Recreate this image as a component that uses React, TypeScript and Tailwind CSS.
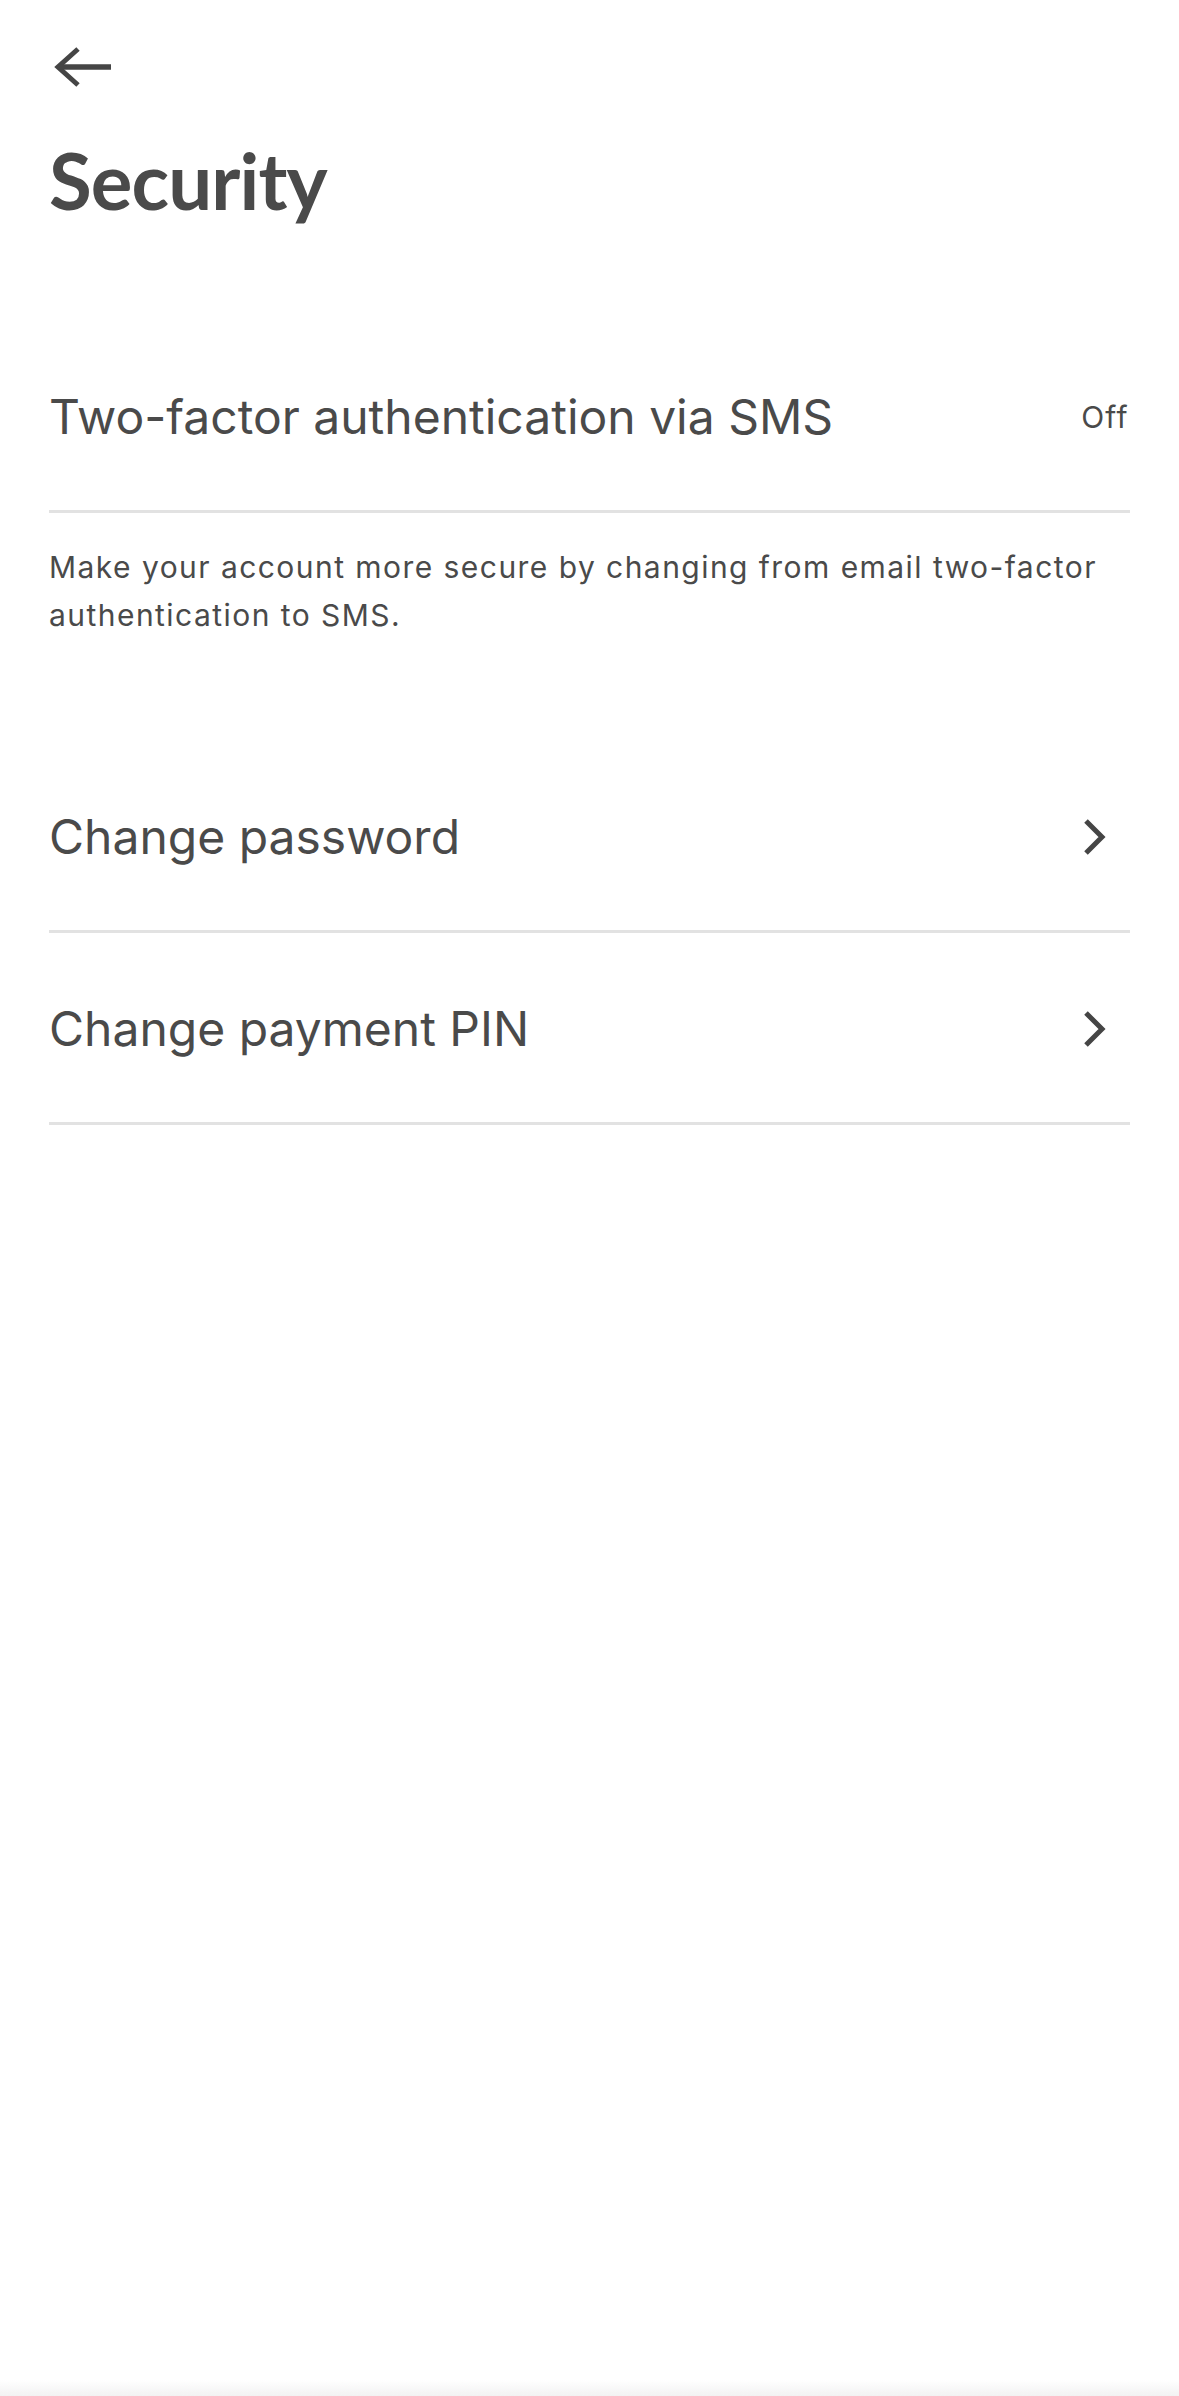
import React from "react";

const BackArrow = () => (
  <svg width="64" height="40" viewBox="0 0 64 40" fill="none">
    <path d="M29 2 L9 20 L29 38" stroke="#454545" strokeWidth="5" />
    <path d="M9 20 H62" stroke="#454545" strokeWidth="5.5" />
  </svg>
);

const Chevron = () => (
  <svg width="24" height="38" viewBox="0 0 24 38" fill="none">
    <path d="M3 3 L19 19 L3 35" stroke="#454545" strokeWidth="5" />
  </svg>
);

const Row = ({ label, right }: { label: string; right: React.ReactNode }) => (
  <div className="flex h-[192px] items-center justify-between border-b-[3px] border-[#e2e2e2] pt-[3px]">
    <span className="text-[48px] leading-none text-[#4a4a4a]">{label}</span>
    {right}
  </div>
);

export default function App() {
  return (
    <div
      className="flex h-[2396px] flex-col bg-white"
      style={{ fontFamily: "Inter, 'Noto Sans', sans-serif" }}
    >
      <div className="flex flex-col px-[49px]">
        {/* header */}
        <div className="pt-[47px]">
          <BackArrow />
        </div>
        <h1
          className="mt-[54px] text-[78px] font-bold leading-none tracking-[-0.9px] text-[#4a4a4a]"
          style={{ fontFamily: "Lato, sans-serif" }}
        >
          Security
        </h1>

        {/* 2FA */}
        <div className="mt-[102px]">
          <Row
            label="Two-factor authentication via SMS"
            right={
              <span className="pr-[1px] text-[30px] tracking-[1.3px] text-[#4a4a4a]">
                Off
              </span>
            }
          />
        </div>
        <p className="mt-[30px] pr-[20px] text-[30px] leading-[48px] tracking-[1.45px] text-[#4a4a4a]">
          Make your account more secure by changing from email two-factor
          authentication to SMS.
        </p>

        {/* password rows */}
        <div className="mt-[102px]">
          <Row
            label="Change password"
            right={
              <span className="pr-[23px]">
                <Chevron />
              </span>
            }
          />
          <Row
            label="Change payment PIN"
            right={
              <span className="pr-[23px]">
                <Chevron />
              </span>
            }
          />
        </div>
      </div>

      <div className="flex-1" />
      <div className="h-[16px] bg-gradient-to-b from-white to-[#f2f2f2]" />
    </div>
  );
}
